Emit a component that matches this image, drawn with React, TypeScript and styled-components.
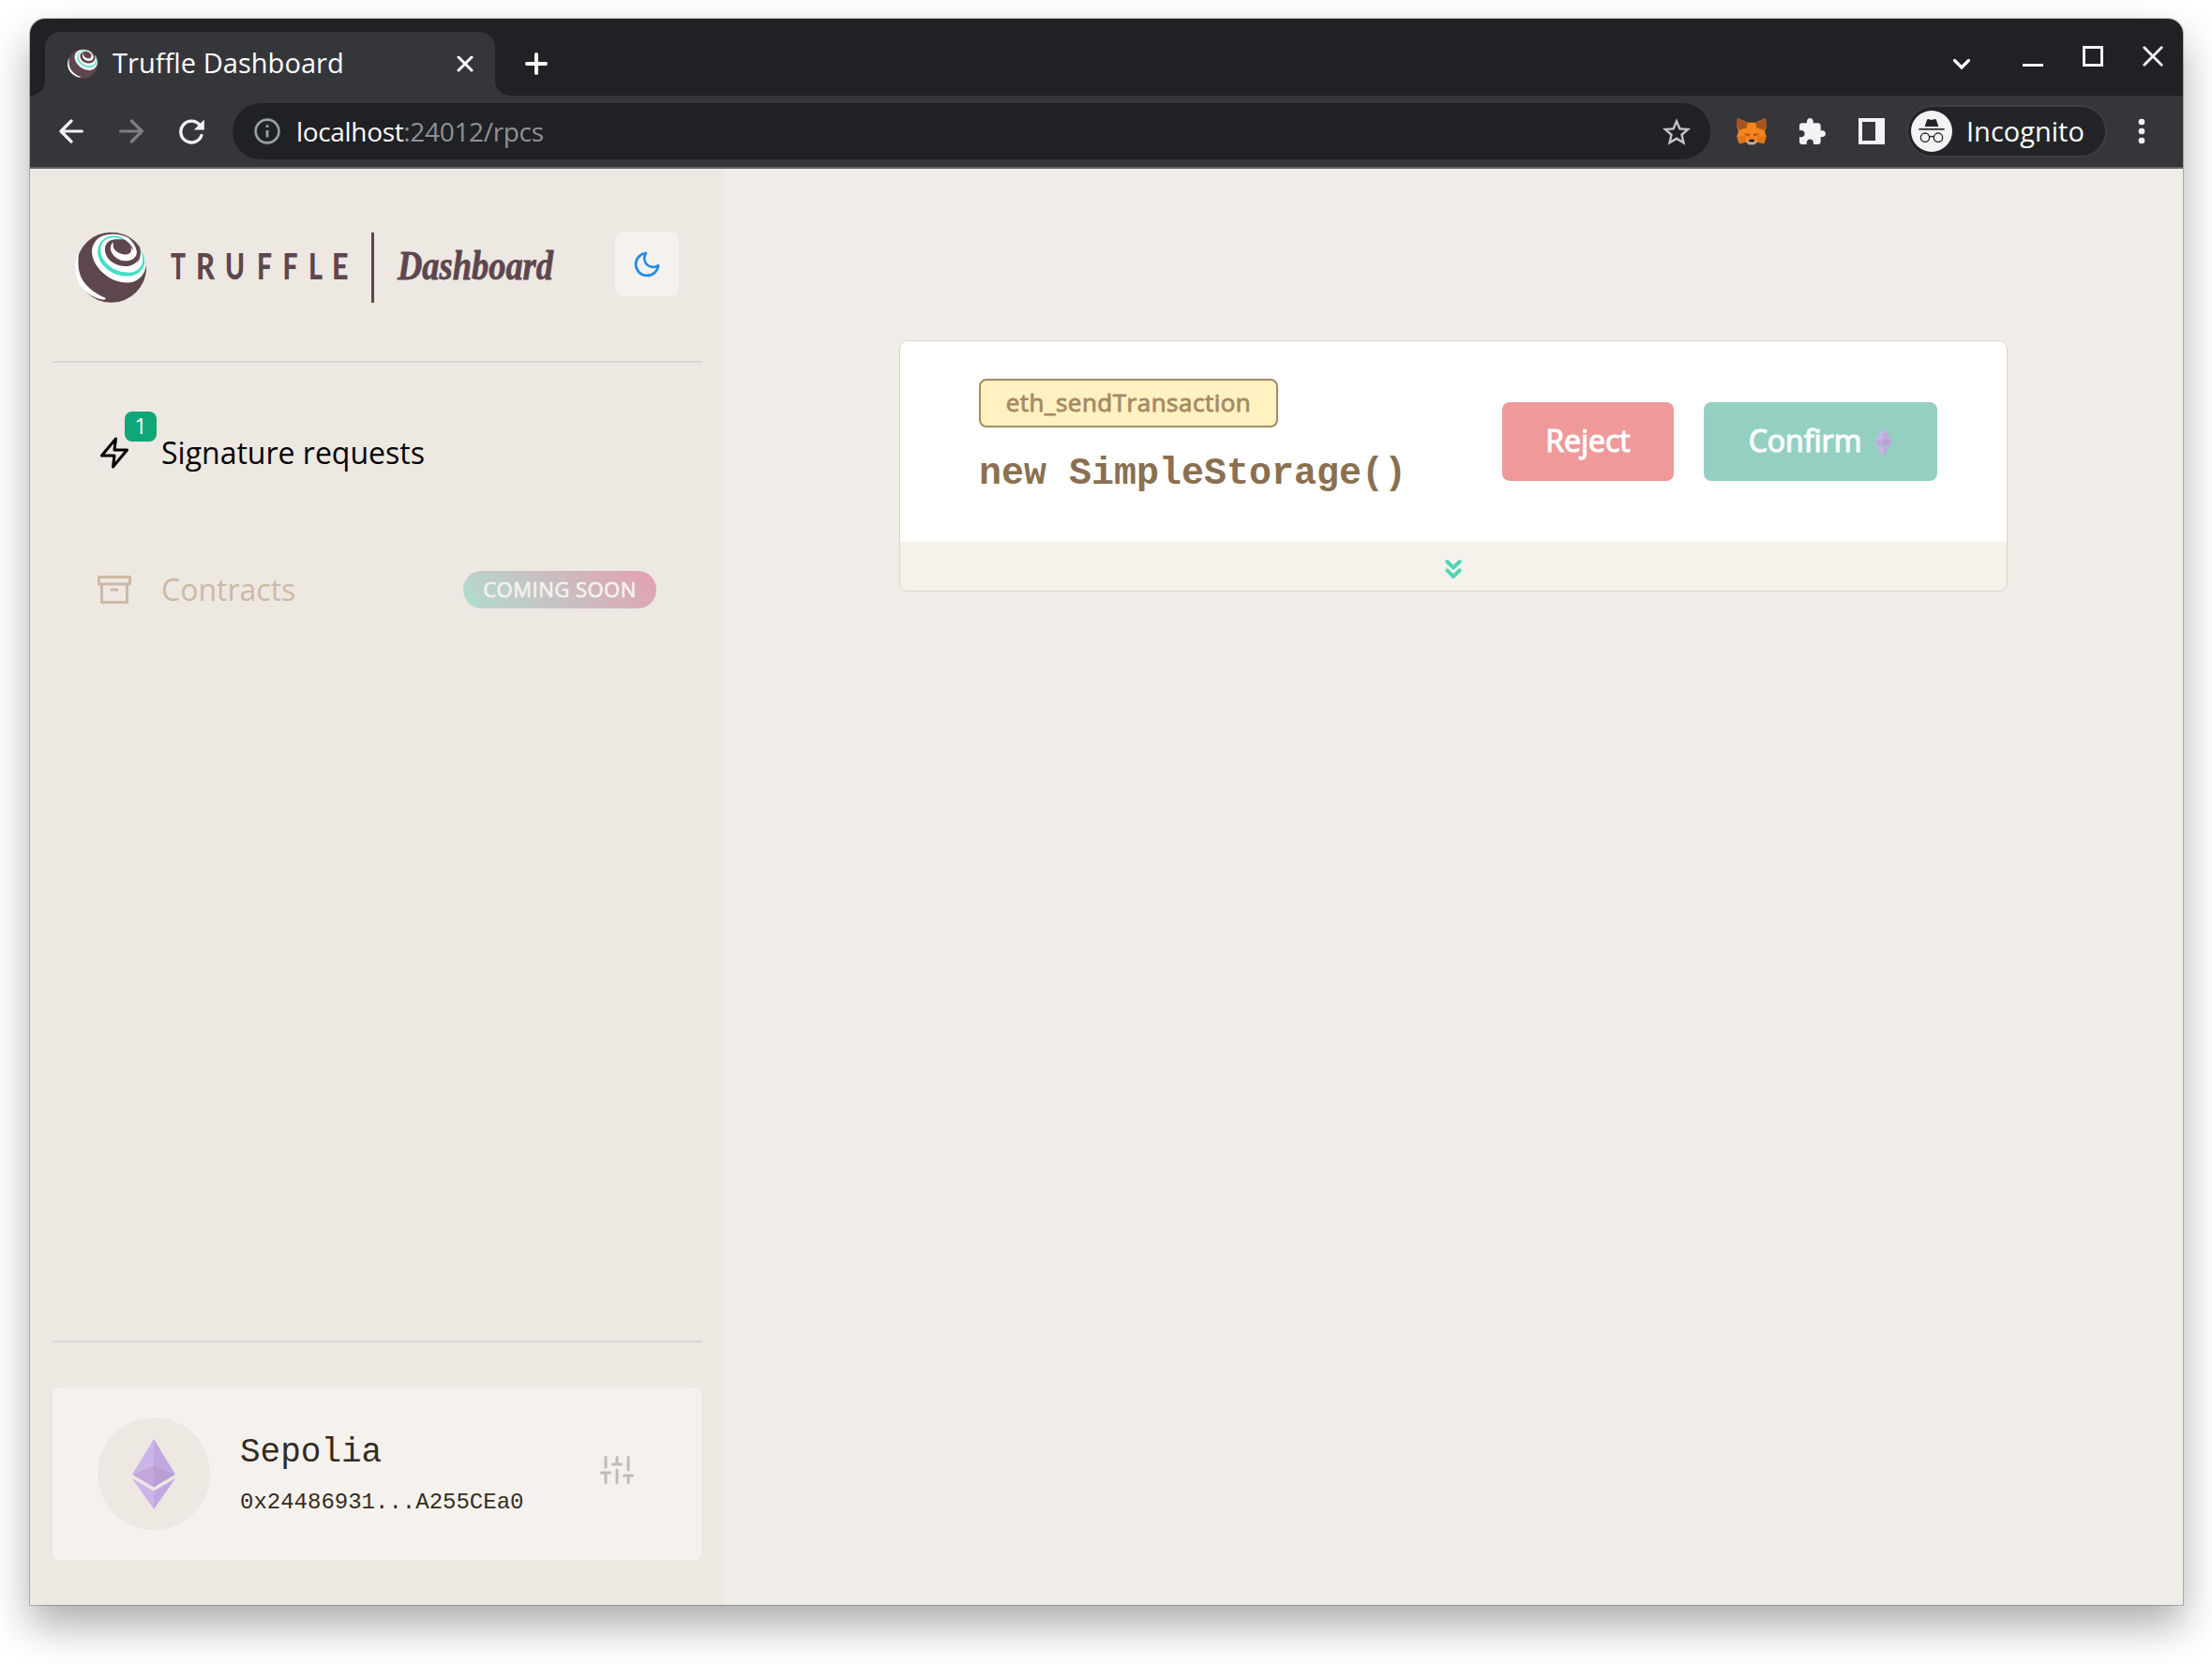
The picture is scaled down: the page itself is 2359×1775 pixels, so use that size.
import React from "react";
import styled, { createGlobalStyle } from "styled-components";

const GlobalStyle = createGlobalStyle`
  * { box-sizing: border-box; }
  html, body { margin: 0; background: #fff; overflow: hidden; }
  svg { display: block; flex: none; }
`;

const sans = `"Open Sans", "Noto Sans", sans-serif`;
const mono = `"Liberation Mono", monospace`;

const Page = styled.div`
  width: 2359px;
  height: 1775px;
  padding: 20px 31px 63px 32px;
  overflow: hidden;
  background: #fff;
  font-family: ${sans};
`;

const Window = styled.div`
  width: 2296px;
  height: 1692px;
  display: flex;
  flex-direction: column;
  border-radius: 16px 16px 0 0;
  background: #f0ede8;
  box-shadow: 0 0 0 1px rgba(0, 0, 0, 0.22), 0 22px 44px rgba(0, 0, 0, 0.32);
`;

/* ---------- browser chrome ---------- */

const TabStrip = styled.div`
  height: 82px;
  flex: none;
  display: flex;
  align-items: flex-start;
  padding: 14px 21px 0 16px;
  border-radius: 16px 16px 0 0;
  background: #202124;
`;

const Tab = styled.div`
  position: relative;
  width: 480px;
  height: 68px;
  display: flex;
  align-items: center;
  padding: 0 23px 0 24px;
  border-radius: 16px 16px 0 0;
  background: #35363a;

  &::before,
  &::after {
    content: "";
    position: absolute;
    bottom: 0;
    width: 16px;
    height: 16px;
  }
  &::before {
    left: -16px;
    background: radial-gradient(circle at 0 0, transparent 15.5px, #35363a 16.5px);
  }
  &::after {
    right: -16px;
    background: radial-gradient(circle at 100% 0, transparent 15.5px, #35363a 16.5px);
  }
`;

const TabTitle = styled.span`
  flex: 1;
  margin-left: 16px;
  padding-bottom: 2px;
  font-size: 29px;
  line-height: 36px;
  letter-spacing: 0.05px;
  white-space: nowrap;
  color: #fff;
`;

const NewTab = styled.div`
  margin: 22px 0 0 32px;
`;

const WindowButtons = styled.div`
  margin-left: auto;
  height: 68px;
  display: flex;
  align-items: flex-start;
  padding-top: 15px;
`;

const WindowButton = styled.div<{ $gap?: number; $drop?: number }>`
  margin-left: ${(p) => p.$gap ?? 0}px;
  margin-top: ${(p) => p.$drop ?? 0}px;
`;

const Toolbar = styled.div`
  height: 78px;
  flex: none;
  display: flex;
  align-items: center;
  padding: 0 40px 0 31px;
  border-bottom: 2px solid #606165;
  background: #35363a;
`;

const NavIcons = styled.div`
  display: flex;
  align-items: center;
  gap: 37px;
`;

const AddressBar = styled.div`
  width: 1576px;
  height: 60px;
  margin-left: 29px;
  display: flex;
  align-items: center;
  padding: 0 21px 0 23px;
  border-radius: 30px;
  background: #202124;
`;

const Address = styled.span`
  flex: 1;
  margin-left: 17px;
  font-size: 28px;
  line-height: 36px;
  letter-spacing: -0.33px;
  white-space: nowrap;
  color: #8f9195;
`;

const Host = styled.span`
  color: #fff;
`;

const Extensions = styled.div`
  display: flex;
  align-items: center;
  gap: 35px;
  margin-left: 28px;
`;

const Incognito = styled.div`
  width: 214px;
  height: 56px;
  margin-left: 23px;
  display: flex;
  align-items: center;
  gap: 15px;
  padding-left: 3px;
  border: 2px solid #3d3e42;
  border-radius: 28px;
  background: #232427;
  color: #fff;
  font-size: 29px;
  line-height: 36px;
  white-space: nowrap;
`;

const MenuDots = styled.div`
  margin-left: auto;
`;

/* ---------- dashboard ---------- */

const Content = styled.div`
  flex: 1;
  display: flex;
`;

const Sidebar = styled.aside`
  width: 740px;
  display: flex;
  flex-direction: column;
  padding: 0 24px 48px;
  background: #ede8e2;
`;

const SidebarHeader = styled.header`
  height: 207px;
  display: flex;
  align-items: flex-start;
  justify-content: space-between;
  padding: 68px 24px 0;
  border-bottom: 2px solid #dad6d1;
`;

const LogoSlot = styled.div`
  margin-top: -4px;
`;

const ThemeToggle = styled.button`
  width: 68px;
  height: 68px;
  display: grid;
  place-items: center;
  padding: 0;
  border: 0;
  border-radius: 8px;
  background: #f5f2ed;
`;

const Nav = styled.nav`
  flex: 1;
  padding: 23px 48px 0;
`;

const NavItem = styled.div<{ $muted?: boolean }>`
  height: 146px;
  display: flex;
  align-items: center;
  color: ${(p) => (p.$muted ? "#cdb9a5" : "#000")};
`;

const NavIcon = styled.div`
  position: relative;
`;

const CountBadge = styled.span`
  position: absolute;
  left: 29px;
  top: -26px;
  width: 34px;
  height: 32px;
  border-radius: 8px;
  background: #0fa678;
  color: #fff;
  font-size: 23px;
  line-height: 31px;
  text-align: center;
`;

const NavLabel = styled.span`
  margin-left: 32px;
  font-size: 32px;
  line-height: 50px;
  white-space: nowrap;
`;

const SoonBadge = styled.span`
  width: 206px;
  height: 40px;
  margin-left: auto;
  border-radius: 20px;
  background: linear-gradient(45deg, #b0ddd0 0%, #e49fb1 100%);
  color: #f5f2ed;
  font-size: 22px;
  line-height: 39px;
  letter-spacing: 0.5px;
  -webkit-text-stroke: 0.7px #f5f2ed;
  text-align: center;
  white-space: nowrap;
`;

const SidebarFooter = styled.footer`
  padding-top: 48px;
  border-top: 2px solid #dad6d1;
`;

const NetworkCard = styled.div`
  height: 184px;
  display: flex;
  align-items: center;
  padding: 0 72px 0 48px;
  border-radius: 8px;
  background: #f5f2ed;
  color: #352a20;
  font-family: ${mono};
`;

const NetworkIcon = styled.div`
  width: 120px;
  height: 120px;
  display: grid;
  place-items: center;
  border-radius: 50%;
  background: #ede8e2;
`;

const NetworkText = styled.div`
  flex: 1;
  margin-left: 32px;
`;

const NetworkName = styled.div`
  font-size: 36px;
  line-height: 56px;
`;

const NetworkAddress = styled.div`
  font-size: 24px;
  line-height: 38px;
  padding-top: 6px;
`;

const SettingsIcon = styled.div`
  padding-bottom: 8px;
  color: #bcbcbc;
`;

const Main = styled.main`
  flex: 1;
  display: flex;
  justify-content: center;
  align-items: flex-start;
  padding-top: 183px;
`;

const RequestCard = styled.section`
  width: 1182px;
  height: 268px;
  display: flex;
  flex-direction: column;
  overflow: hidden;
  border: 1px solid #dcd3c5;
  border-radius: 9px;
  background: #fff;
`;

const RequestBody = styled.div`
  flex: 1;
  display: flex;
  justify-content: space-between;
  padding: 40px 74px 0 84px;
`;

const MethodTag = styled.div`
  width: 319px;
  height: 52px;
  border: 2px solid #a68a64;
  border-radius: 8px;
  background: #fff1c0;
  color: #a68a64;
  font-size: 26px;
  line-height: 47px;
  letter-spacing: 0.5px;
  -webkit-text-stroke: 0.9px #a68a64;
  text-align: center;
  white-space: nowrap;
`;

const CallTitle = styled.h1`
  margin: 20px 0 0;
  font-family: ${mono};
  font-size: 40px;
  font-weight: 700;
  line-height: 60px;
  white-space: pre;
  color: #8a6f50;
`;

const Actions = styled.div`
  display: flex;
  gap: 32px;
  padding-top: 25px;
`;

const ActionButton = styled.button<{ $color: string; $width: number }>`
  width: ${(p) => p.$width}px;
  height: 84px;
  display: flex;
  align-items: center;
  justify-content: center;
  gap: 14px;
  padding: 0;
  border: 0;
  border-radius: 8px;
  background: ${(p) => p.$color};
  color: #fff;
  font-family: ${sans};
  font-size: 32px;
  white-space: nowrap;
  -webkit-text-stroke: 1.2px #fff;
`;

const ButtonLabel = styled.span`
  padding-bottom: 4px;
`;

const Expander = styled.div`
  height: 52px;
  display: flex;
  justify-content: center;
  padding-top: 13px;
  background: #f5f1eb;
  color: #4fd5b8;
`;

/* ---------- drawings ---------- */

const Feather = ({ size = 36, weight = 2, children }: { size?: number; weight?: number; children: React.ReactNode }) => (
  <svg width={size} height={size} viewBox="0 0 24 24" fill="none" stroke="currentColor" strokeWidth={weight} strokeLinecap="round" strokeLinejoin="round">
    {children}
  </svg>
);

const Globe = ({ width, height }: { width: number; height: number }) => (
  <svg width={width} height={height} viewBox="120 143 228 226">
    <circle cx="236" cy="256" r="112.5" fill="#5e464d" />
    <path fill="#fff" d="M133 208C118 236 117 275 131 303C145 331 176 354 209 359Q219 360 218 354C180 338 145 312 135 275C129 252 129 230 133 208Z" />
    <path fill="#fff" d="M235 150C200 150 175 172 174 206C174 247 222 304 286 305C318 305 339 284 346 258C351 235 342 210 328 190C330 210 331 228 318 242C335 210 320 180 296 164C278 154 256 149 235 150Z" />
    <path fill="#3fe0c5" d="M309 208C304 178 275 155 243 155C211 157 191 180 193 210C197 250 240 284 288 284C325 283 344 258 343 233C341 215 334 202 325 192C336 210 340 229 334 246C326 265 307 274 286 272C243 271 206 240 202 206C200 177 218 161 243 160C271 160 298 180 309 208Z" />
    <path fill="#5e464d" d="M252 166C227 166 213 183 216 204C221 235 254 254 288 252C316 249 331 228 329 204C325 184 308 167 287 158C305 174 315 188 316 203C310 188 297 169 270 166Z" />
    <path fill="#fff" d="M243 175C231 184 231 199 240 213C252 230 271 237 289 235C309 232 320 218 317 203C313 183 293 167 266 160C287 169 303 185 307 203C299 191 290 182 278 178C293 185 300 195 299 206C292 219 268 216 255 206C244 199 241 187 243 175Z" />
    <path fill="#5e464d" d="M243 175C250 165 279 166 293 181C300 189 302 201 296 208C284 219 262 213 251 203C242 195 241 184 243 175Z" />
  </svg>
);

const letters: [string, number, number][] = [
  ["T", 182, 16],
  ["R", 209, 20],
  ["U", 240, 21],
  ["F", 274, 16],
  ["F", 301.5, 16],
  ["L", 329, 15],
  ["E", 354, 17.5],
];

const Logo = () => (
  <svg width="564" height="84" viewBox="80 244 564 84">
    <svg x="80" y="247.5" width="76" height="75.5" viewBox="0 0 76 75.5">
      <Globe width={76} height={75.5} />
    </svg>
    <g fill="#5e464d">
      {letters.map(([c, x, w], i) => (
        <text key={i} x={x} y="298.3" textLength={w} lengthAdjust="spacingAndGlyphs" fontFamily="Lato, sans-serif" fontWeight="900" fontSize="37">
          {c}
        </text>
      ))}
      <rect x="396" y="248" width="3" height="75" />
      <text
        x="424"
        y="298"
        textLength="166"
        lengthAdjust="spacingAndGlyphs"
        fontFamily='"Liberation Serif", serif'
        fontStyle="italic"
        fontWeight="700"
        fontSize="45"
        stroke="#5e464d"
        strokeWidth="0.8"
        strokeLinejoin="round"
      >
        Dashboard
      </text>
    </g>
  </svg>
);

const Ether = ({ width, height }: { width: number; height: number }) => (
  <svg width={width} height={height} viewBox="0 0 46 75">
    <path fill="#cbb6ea" d="M23 0L0 37.8L23 28Z" />
    <path fill="#c1a8e0" d="M23 0L46 37.8L23 28Z" />
    <path fill="#c2a7dd" d="M0 37.8L23 28V51.4Z" />
    <path fill="#bb9ed3" d="M46 37.8L23 28V51.4Z" />
    <path fill="#cbb6ea" d="M0 42L23 55.5V75Z" />
    <path fill="#c1a8e0" d="M46 42L23 55.5V75Z" />
  </svg>
);

const Fox = () => (
  <svg width="32" height="30" viewBox="0 0 96 90">
    <path fill="#f6851b" d="M3 2L36 17H60L93 2L96 30L90 44L95 62L88 84L66 80L56 88H40L30 80L8 84L1 62L6 44L0 30Z" />
    <path fill="#a65422" d="M3 2L36 17L32 34L8 42L0 28Z" />
    <path fill="#a65422" d="M93 2L60 17L64 34L88 42L96 28Z" />
    <path fill="#e2761b" d="M1 62L28 60L30 80L8 84Z" />
    <path fill="#e2761b" d="M95 62L68 60L66 80L88 84Z" />
    <path fill="#cd6116" d="M24 50L38 54L42 62L26 58ZM72 50L58 54L54 62L70 58Z" />
    <path fill="#233447" d="M33 53L41 55L40 59ZM63 53L55 55L56 59Z" />
    <path fill="#c0ad9e" d="M30 79L40 74H56L66 79L57 88H39Z" />
    <path fill="#161616" d="M41 71H55L57 79H39Z" />
  </svg>
);

const Spy = () => (
  <svg width="44" height="44" viewBox="0 0 132 132">
    <circle cx="66" cy="66" r="66" fill="#f1f3f4" />
    <path fill="#232427" d="M44 51L51 30Q53 26 58 28L66 30L74 28Q79 26 81 30L88 51Z" />
    <path fill="#232427" d="M25 57H107V62H25Z" />
    <g fill="none" stroke="#232427" strokeWidth="4">
      <circle cx="45" cy="86" r="14" />
      <circle cx="87" cy="86" r="14" />
      <path d="M59 84Q66 80 73 84" />
    </g>
  </svg>
);

export default function App() {
  return (
    <>
      <GlobalStyle />
      <Page>
        <Window>
          <TabStrip>
            <Tab>
              <Globe width={32} height={32} />
              <TabTitle>Truffle Dashboard</TabTitle>
              <svg width="18" height="18" viewBox="0 0 18 18" fill="none" stroke="#fff" strokeWidth="3" strokeLinecap="round">
                <path d="M2 2L16 16M16 2L2 16" />
              </svg>
            </Tab>
            <NewTab>
              <svg width="24" height="24" viewBox="0 0 24 24" stroke="#fff" strokeWidth="4" strokeLinecap="round">
                <path d="M12 2V22M2 12H22" />
              </svg>
            </NewTab>
            <WindowButtons>
              <WindowButton $drop={13}>
                <svg width="20" height="14" viewBox="0 0 20 14" fill="none" stroke="#fff" strokeWidth="3.2" strokeLinecap="round">
                  <path d="M2.5 2.5L10 10L17.5 2.5" />
                </svg>
              </WindowButton>
              <WindowButton $gap={55} $drop={19}>
                <svg width="22" height="3" viewBox="0 0 22 3">
                  <rect width="22" height="3" fill="#f1f3f4" />
                </svg>
              </WindowButton>
              <WindowButton $gap={42}>
                <svg width="22" height="22" viewBox="0 0 22 22">
                  <rect x="1.5" y="1.5" width="19" height="19" fill="none" stroke="#f1f3f4" strokeWidth="3" />
                </svg>
              </WindowButton>
              <WindowButton $gap={42}>
                <svg width="22" height="22" viewBox="0 0 22 22" stroke="#f1f3f4" strokeWidth="2.8" strokeLinecap="round">
                  <path d="M1.8 1.8L20.2 20.2M20.2 1.8L1.8 20.2" />
                </svg>
              </WindowButton>
            </WindowButtons>
          </TabStrip>

          <Toolbar>
            <NavIcons>
              <svg width="27" height="26" viewBox="0 0 27 26" fill="none" stroke="#f1f3f4" strokeWidth="3.2" strokeLinecap="round" strokeLinejoin="round">
                <path d="M24.4 13H2.2M13 2L2 13L13 24" />
              </svg>
              <svg width="27" height="26" viewBox="0 0 27 26" fill="none" stroke="#7d7e82" strokeWidth="3.2" strokeLinecap="round" strokeLinejoin="round">
                <path d="M1.6 13H24M13.400 2L24.400 13L13.400 24" />
              </svg>
              <svg width="28" height="27" viewBox="0.5 0 28 27" fill="none" stroke="#f1f3f4" strokeWidth="3.4">
                <path d="M22.5 6.3A11.4 11.4 0 1 0 24.4 17.5" strokeLinecap="round" />
                <path d="M27.3 0.5V11.5H16.3Z" fill="#f1f3f4" stroke="none" />
              </svg>
            </NavIcons>
            <AddressBar>
              <svg width="28" height="28" viewBox="0 0 28 28" fill="none" stroke="#9aa0a6">
                <circle cx="14" cy="14" r="12.4" strokeWidth="2.6" />
                <path d="M14 13V20.5M14 7.3V10" strokeWidth="2.8" />
              </svg>
              <Address>
                <Host>localhost</Host>:24012/rpcs
              </Address>
              <svg width="30" height="29" viewBox="2 2 20 19" fill="#c4c4c5">
                <path d="M22 9.24l-7.19-.62L12 2 9.19 8.63 2 9.24l5.46 4.73L5.82 21 12 17.27 18.18 21l-1.63-7.03L22 9.24zM12 15.4l-3.76 2.27 1-4.28-3.32-2.88 4.38-.38L12 6.1l1.71 4.04 4.38.38-3.32 2.88 1 4.28L12 15.4z" />
              </svg>
            </AddressBar>
            <Extensions>
              <Fox />
              <svg width="28" height="28" viewBox="2 1 21 21" fill="#f1f3f4">
                <path d="M20.5 11H19V7c0-1.1-.9-2-2-2h-4V3.5C13 2.12 11.88 1 10.5 1S8 2.12 8 3.5V5H4c-1.1 0-1.99.9-1.99 2v3.8H3.5c1.49 0 2.7 1.21 2.7 2.7s-1.21 2.7-2.7 2.7H2V20c0 1.1.9 2 2 2h3.8v-1.5c0-1.49 1.21-2.7 2.7-2.7 1.49 0 2.7 1.21 2.7 2.7V22H17c1.1 0 2-.9 2-2v-4h1.5c1.38 0 2.5-1.12 2.5-2.5S21.88 11 20.5 11z" />
              </svg>
              <svg width="28" height="28" viewBox="0 0 28 28">
                <path fill="#f1f3f4" fillRule="evenodd" d="M0 0H28V28H0ZM4 4V24H18V4Z" />
              </svg>
            </Extensions>
            <Incognito>
              <Spy />
              <span>Incognito</span>
            </Incognito>
            <MenuDots>
              <svg width="8" height="28" viewBox="0 0 8 28" fill="#f1f3f4">
                <circle cx="4" cy="4" r="3.3" />
                <circle cx="4" cy="14" r="3.3" />
                <circle cx="4" cy="24" r="3.3" />
              </svg>
            </MenuDots>
          </Toolbar>

          <Content>
            <Sidebar>
              <SidebarHeader>
                <LogoSlot>
                  <Logo />
                </LogoSlot>
                <ThemeToggle aria-label="Toggle theme">
                  <svg width="32" height="32" viewBox="0 0 24 24" fill="none" stroke="#228be6" strokeWidth="2" strokeLinejoin="round">
                    <path d="M21 12.79A9 9 0 1 1 11.21 3 7 7 0 0 0 21 12.79z" />
                  </svg>
                </ThemeToggle>
              </SidebarHeader>
              <Nav>
                <NavItem>
                  <NavIcon>
                    <Feather>
                      <path d="M13 2L3 14H12L11 22L21 10H12L13 2Z" />
                    </Feather>
                    <CountBadge>1</CountBadge>
                  </NavIcon>
                  <NavLabel>Signature requests</NavLabel>
                </NavItem>
                <NavItem $muted>
                  <Feather>
                    <path d="M21 8V21H3V8M1 3H23V8H1ZM10 12H14" />
                  </Feather>
                  <NavLabel>Contracts</NavLabel>
                  <SoonBadge>COMING SOON</SoonBadge>
                </NavItem>
              </Nav>
              <SidebarFooter>
                <NetworkCard>
                  <NetworkIcon>
                    <Ether width={46} height={75} />
                  </NetworkIcon>
                  <NetworkText>
                    <NetworkName>Sepolia</NetworkName>
                    <NetworkAddress>0x24486931...A255CEa0</NetworkAddress>
                  </NetworkText>
                  <SettingsIcon>
                    <Feather>
                      <path d="M4 21V14M4 10V3M12 21V12M12 8V3M20 21V16M20 12V3M1 14H7M9 8H15M17 16H23" />
                    </Feather>
                  </SettingsIcon>
                </NetworkCard>
              </SidebarFooter>
            </Sidebar>

            <Main>
              <RequestCard>
                <RequestBody>
                  <div>
                    <MethodTag>eth_sendTransaction</MethodTag>
                    <CallTitle>new SimpleStorage()</CallTitle>
                  </div>
                  <Actions>
                    <ActionButton $color="#ef9999" $width={183}>
                      <ButtonLabel>Reject</ButtonLabel>
                    </ActionButton>
                    <ActionButton $color="#94d0c1" $width={249}>
                      <ButtonLabel>Confirm</ButtonLabel>
                      <Ether width={19} height={31} />
                    </ActionButton>
                  </Actions>
                </RequestBody>
                <Expander>
                  <Feather size={32} weight={3}>
                    <path d="M7 13L12 18L17 13M7 6L12 11L17 6" />
                  </Feather>
                </Expander>
              </RequestCard>
            </Main>
          </Content>
        </Window>
      </Page>
    </>
  );
}
